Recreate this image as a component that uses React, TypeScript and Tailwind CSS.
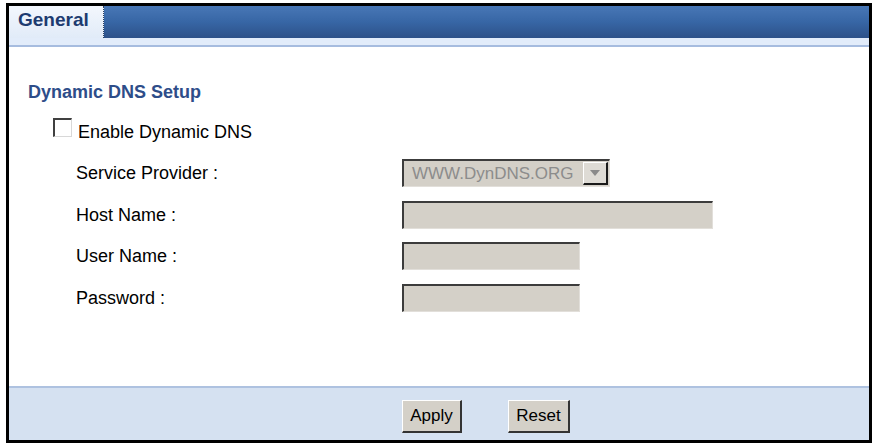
const fields = [
  { label: "Host Name :", width: "w-[311px]" },
  { label: "User Name :", width: "w-[178px]" },
  { label: "Password :", width: "w-[178px]" },
];

function Field({ width }: { width: string }) {
  return (
    <div
      className={`${width} h-[28px] bg-[#d4d0c8] border-t-2 border-l-2 border-r border-b border-t-[#3c3c3c] border-l-[#3c3c3c] border-r-[#e2dfda] border-b-[#e2dfda]`}
    />
  );
}

function ProviderSelect() {
  return (
    <div className="w-[208px] h-[28px] bg-[#d4d0c8] border-t-2 border-l-2 border-r border-b border-t-[#3c3c3c] border-l-[#3c3c3c] border-r-[#e2dfda] border-b-[#e2dfda] flex items-center justify-between">
      <span className="pl-[8px] text-[17px] leading-[20px] text-[#8c8c8c]">
        WWW.DynDNS.ORG
      </span>
      <span className="w-[25px] h-[23px] mr-[1px] bg-[#dedbd5] border-t border-l border-white border-r-2 border-b-2 border-r-[#1a1a1a] border-b-[#1a1a1a] flex items-center justify-center">
        <svg width="10" height="6" viewBox="0 0 10 6">
          <polygon points="0,0 10,0 5,6" fill="#8a8a8a" />
        </svg>
      </span>
    </div>
  );
}

function Button({ label, width }: { label: string; width: string }) {
  return (
    <button
      className={`${width} h-[33px] bg-[#d4d0c8] text-[17px] leading-[20px] text-black border-t border-l border-t-white border-l-white border-r-2 border-b-2 border-r-[#333] border-b-[#333]`}
    >
      {label}
    </button>
  );
}

export default function App() {
  return (
    <div className="w-[879px] h-[443px] bg-white pt-[3px] pl-[6px] font-['Liberation_Sans',Arial,sans-serif]">
      <div className="w-[866px] h-[440px] border-[3px] border-b-[3px] border-black flex flex-col">
        <div className="h-[32px] flex">
          <div className="w-[95px] pl-[9px] pt-[3px] bg-gradient-to-b from-[#f3f7fd] to-[#e1ebf8] border-r border-dotted border-r-[#2b3f5e] text-[19px] leading-[22px] font-bold text-[#1d3b70]">
            General
          </div>
          <div className="flex-1 bg-gradient-to-b from-[#4877b6] via-[#3766a5] to-[#2d5189]" />
        </div>
        <div className="h-[9px] bg-[#e2ecfa] border-b-2 border-b-[#a6bcdf]" />

        <div className="flex-1 pt-[35px] pl-[19px]">
          <h2 className="text-[18px] leading-[20px] font-bold text-[#2e4d89]">
            Dynamic DNS Setup
          </h2>
          <label className="mt-[16px] ml-[25px] flex items-start gap-[6px]">
            <span className="w-[19px] h-[19px] bg-white border-t-2 border-l-2 border-r border-b border-t-[#404040] border-l-[#404040] border-r-[#d8d8d8] border-b-[#d8d8d8]" />
            <span className="mt-[4px] text-[18px] leading-[20px] text-black">
              Enable Dynamic DNS
            </span>
          </label>

          <div className="mt-[17px] ml-[48px] grid grid-cols-[326px_1fr] gap-y-[13.5px] items-center text-[18px] leading-[20px] text-black">
            <span>Service Provider :</span>
            <ProviderSelect />
            {fields.map((f) => (
              <>
                <span key={f.label}>{f.label}</span>
                <Field width={f.width} />
              </>
            ))}
          </div>
        </div>

        <div className="h-[54px] bg-[#d5e1f1] border-t-2 border-t-[#aec2e0] pt-[12px] pl-[393px] flex items-start gap-[46px]">
          <Button label="Apply" width="w-[60px]" />
          <Button label="Reset" width="w-[62px]" />
        </div>
      </div>
    </div>
  );
}
